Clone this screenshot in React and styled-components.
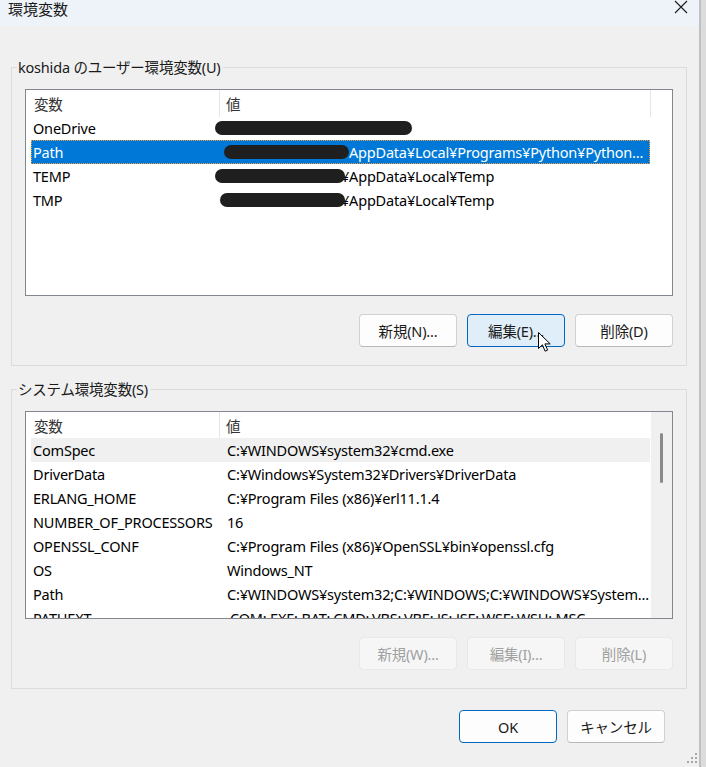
import React from 'react';
import styled, { createGlobalStyle } from 'styled-components';

const GlobalStyle = createGlobalStyle`
  html, body {
    margin: 0;
    padding: 0;
    background: #dcdcdc;
  }
  body {
    font-family: "Noto Sans", "Noto Sans CJK JP", sans-serif;
    font-size: 14.5px;
    letter-spacing: -0.2px;
    color: #000;
  }
`;

const userVars = [
  { name: 'OneDrive', value: '', redact: { w: 197, ml: -12, mr: 0 } },
  { name: 'Path', value: 'AppData¥Local¥Programs¥Python¥Python...', redact: { w: 125, ml: -3, mr: 0 }, selected: true },
  { name: 'TEMP', value: '¥AppData¥Local¥Temp', redact: { w: 130, ml: -12, mr: -4 } },
  { name: 'TMP', value: '¥AppData¥Local¥Temp', redact: { w: 125, ml: -7, mr: -4 } },
];

const systemVars = [
  { name: 'ComSpec', value: 'C:¥WINDOWS¥system32¥cmd.exe', hover: true },
  { name: 'DriverData', value: 'C:¥Windows¥System32¥Drivers¥DriverData' },
  { name: 'ERLANG_HOME', value: 'C:¥Program Files (x86)¥erl11.1.4' },
  { name: 'NUMBER_OF_PROCESSORS', value: '16' },
  { name: 'OPENSSL_CONF', value: 'C:¥Program Files (x86)¥OpenSSL¥bin¥openssl.cfg' },
  { name: 'OS', value: 'Windows_NT' },
  { name: 'Path', value: 'C:¥WINDOWS¥system32;C:¥WINDOWS;C:¥WINDOWS¥System...' },
  { name: 'PATHEXT', value: '.COM;.EXE;.BAT;.CMD;.VBS;.VBE;.JS;.JSE;.WSF;.WSH;.MSC' },
];

function VarList({ rows, scroll, height }) {
  return (
    <ListBox $h={height}>
      <ListMain>
        <HeaderRow $scroll={scroll}>
          <HeaderCell $divider>変数</HeaderCell>
          <HeaderCell $divider={!scroll} $value>値</HeaderCell>
        </HeaderRow>
        <Rows>
          {rows.map((r) => (
            <Row key={r.name} $selected={r.selected} $hover={r.hover}>
              <NameCell>{r.name}</NameCell>
              <ValueCell>
                {r.redact && <Redact $w={r.redact.w} $ml={r.redact.ml} $mr={r.redact.mr} />}
                {r.value}
              </ValueCell>
            </Row>
          ))}
        </Rows>
      </ListMain>
      {scroll && (
        <ScrollTrack>
          <Thumb />
        </ScrollTrack>
      )}
    </ListBox>
  );
}

export default function App() {
  return (
    <>
      <GlobalStyle />
      <Root>
        <Window>
          <TitleBar>
            <Title>環境変数</Title>
            <CloseBtn>
              <svg width="14" height="14" viewBox="0 0 14 14">
                <path d="M1 1 L13 13 M13 1 L1 13" stroke="#1a1a1a" strokeWidth="1.1" fill="none" />
              </svg>
            </CloseBtn>
          </TitleBar>
          <Body>
            <Group>
              <Legend>koshida のユーザー環境変数(U)</Legend>
              <VarList rows={userVars} height={207} />
              <ButtonRow>
                <Button>新規(N)...</Button>
                <Button $hot>編集(E)...</Button>
                <Button>削除(D)</Button>
              </ButtonRow>
            </Group>
            <Group $second>
              <Legend>システム環境変数(S)</Legend>
              <VarList rows={systemVars} scroll height={208} />
              <ButtonRow>
                <Button disabled>新規(W)...</Button>
                <Button disabled>編集(I)...</Button>
                <Button disabled>削除(L)</Button>
              </ButtonRow>
            </Group>
            <Footer>
              <Button $default>OK</Button>
              <Button>キャンセル</Button>
            </Footer>
          </Body>
          <Grip>
            <svg width="12" height="12" viewBox="0 0 12 12">
              <rect x="9" y="1" width="2" height="2" fill="#a8a8a8" />
              <rect x="5" y="5" width="2" height="2" fill="#a8a8a8" />
              <rect x="9" y="5" width="2" height="2" fill="#a8a8a8" />
              <rect x="1" y="9" width="2" height="2" fill="#a8a8a8" />
              <rect x="5" y="9" width="2" height="2" fill="#a8a8a8" />
              <rect x="9" y="9" width="2" height="2" fill="#a8a8a8" />
            </svg>
          </Grip>
        </Window>
        <Cursor>
          <svg width="14" height="21" viewBox="0 0 14 21">
            <path
              d="M0.5 0.5 L0.5 16.5 L4.4 12.8 L7.1 19.2 L9.6 18.1 L6.9 11.9 L12.2 11.9 Z"
              fill="#fff"
              stroke="#000"
              strokeWidth="1"
              strokeLinejoin="round"
            />
          </svg>
        </Cursor>
      </Root>
    </>
  );
}

const Root = styled.div`
  position: relative;
  width: 706px;
  height: 767px;
  overflow: hidden;
`;

const Window = styled.div`
  position: relative;
  width: 701px;
  height: 767px;
  box-sizing: border-box;
  background: #f0f0f0;
  border-right: 2px solid #c0c0c0;
  display: flex;
  flex-direction: column;
`;

const TitleBar = styled.div`
  height: 26px;
  background: #eef3f9;
  display: flex;
  align-items: flex-start;
  justify-content: space-between;
  padding: 0 11px 0 8px;
`;

const Title = styled.div`
  font-family: "Noto Sans CJK JP", sans-serif;
  font-size: 15px;
  letter-spacing: 0;
  line-height: 17px;
  color: #1a1a1a;
`;

const CloseBtn = styled.div`
  display: flex;
`;

const Body = styled.div`
  padding: 32px 12px 0 11px;
  display: flex;
  flex-direction: column;
`;

const Group = styled.fieldset`
  margin: ${(p) => (p.$second ? '14px 0 0 0' : '0')};
  padding: 13px 13px 18px 13px;
  border: 1px solid #dcdcdc;
  min-width: 0;
  width: 676px;
  box-sizing: border-box;
`;

const Legend = styled.legend`
  font-size: 14.5px;
  line-height: 18px;
  padding: 0 2px 0 1px;
  margin-left: -8px;
  color: #1a1a1a;
`;

const ListBox = styled.div`
  height: ${(p) => p.$h}px;
  box-sizing: border-box;
  border: 1px solid #82868f;
  background: #fff;
  display: flex;
  overflow: hidden;
`;

const ListMain = styled.div`
  flex: 1;
  min-width: 0;
  display: flex;
  flex-direction: column;
`;

const HeaderRow = styled.div`
  height: 26px;
  flex: none;
  display: grid;
  grid-template-columns: ${(p) => (p.$scroll ? '194px 431px' : '194px 431px 1fr')};
`;

const HeaderCell = styled.div`
  font-family: "Noto Sans CJK JP", sans-serif;
  line-height: 27px;
  color: #333;
  padding-left: ${(p) => (p.$value ? '6px' : '8px')};
  border-right: ${(p) => (p.$divider ? '1px solid #e5e5e5' : 'none')};
`;

const Rows = styled.div`
  flex: 1;
  overflow: hidden;
  padding-left: 5px;
`;

const Row = styled.div`
  width: 619px;
  height: 24px;
  box-sizing: border-box;
  display: grid;
  grid-template-columns: 184px 1fr;
  align-items: center;
  background: ${(p) => (p.$selected ? '#0078d7' : p.$hover ? '#f0f0f0' : 'transparent')};
  color: ${(p) => (p.$selected ? '#fff' : '#000')};
  outline: ${(p) => (p.$selected ? '1px dotted #f0a040' : 'none')};
  outline-offset: -1px;
  white-space: nowrap;
`;

const NameCell = styled.div`
  padding-left: 2px;
  overflow: hidden;
`;

const ValueCell = styled.div`
  padding-left: 12px;
  overflow: hidden;
  text-overflow: ellipsis;
`;

const Redact = styled.span`
  position: relative;
  z-index: 1;
  display: inline-block;
  vertical-align: middle;
  top: -2px;
  width: ${(p) => p.$w}px;
  height: 14px;
  margin-left: ${(p) => p.$ml}px;
  margin-right: ${(p) => p.$mr}px;
  background: #1f1f1f;
  border-radius: 7px;
`;

const ScrollTrack = styled.div`
  width: 21px;
  flex: none;
  background: #f0f0f0;
  display: flex;
  justify-content: center;
  padding-top: 21px;
  box-sizing: border-box;
`;

const Thumb = styled.div`
  width: 3px;
  height: 50px;
  border-radius: 2px;
  background: #8a8a8a;
`;

const ButtonRow = styled.div`
  display: flex;
  justify-content: flex-end;
  gap: 10px;
  margin-top: 18px;
`;

const Button = styled.button`
  width: 98px;
  height: 33px;
  box-sizing: border-box;
  border-radius: 4px;
  font-family: "Noto Sans", "Noto Sans CJK JP", sans-serif;
  font-size: 14.5px;
  letter-spacing: -0.2px;
  padding: 0;
  color: ${(p) => (p.disabled ? '#a0a0a0' : '#1a1a1a')};
  background: ${(p) => (p.disabled ? '#f6f6f6' : p.$hot ? '#e0eef9' : '#fdfdfd')};
  border: 1px solid ${(p) => (p.disabled ? '#e8e8e8' : p.$hot || p.$default ? '#0067c0' : '#d0d0d0')};
  border-bottom-color: ${(p) => (p.disabled ? '#e8e8e8' : p.$hot || p.$default ? '#0067c0' : '#b8b8b8')};
`;

const Footer = styled.div`
  display: flex;
  justify-content: flex-end;
  gap: 10px;
  margin-top: 21px;
  padding-right: 22px;
`;

const Grip = styled.div`
  position: absolute;
  right: 1px;
  bottom: 3px;
  display: flex;
`;

const Cursor = styled.div`
  position: absolute;
  left: 538px;
  top: 332px;
  display: flex;
`;
